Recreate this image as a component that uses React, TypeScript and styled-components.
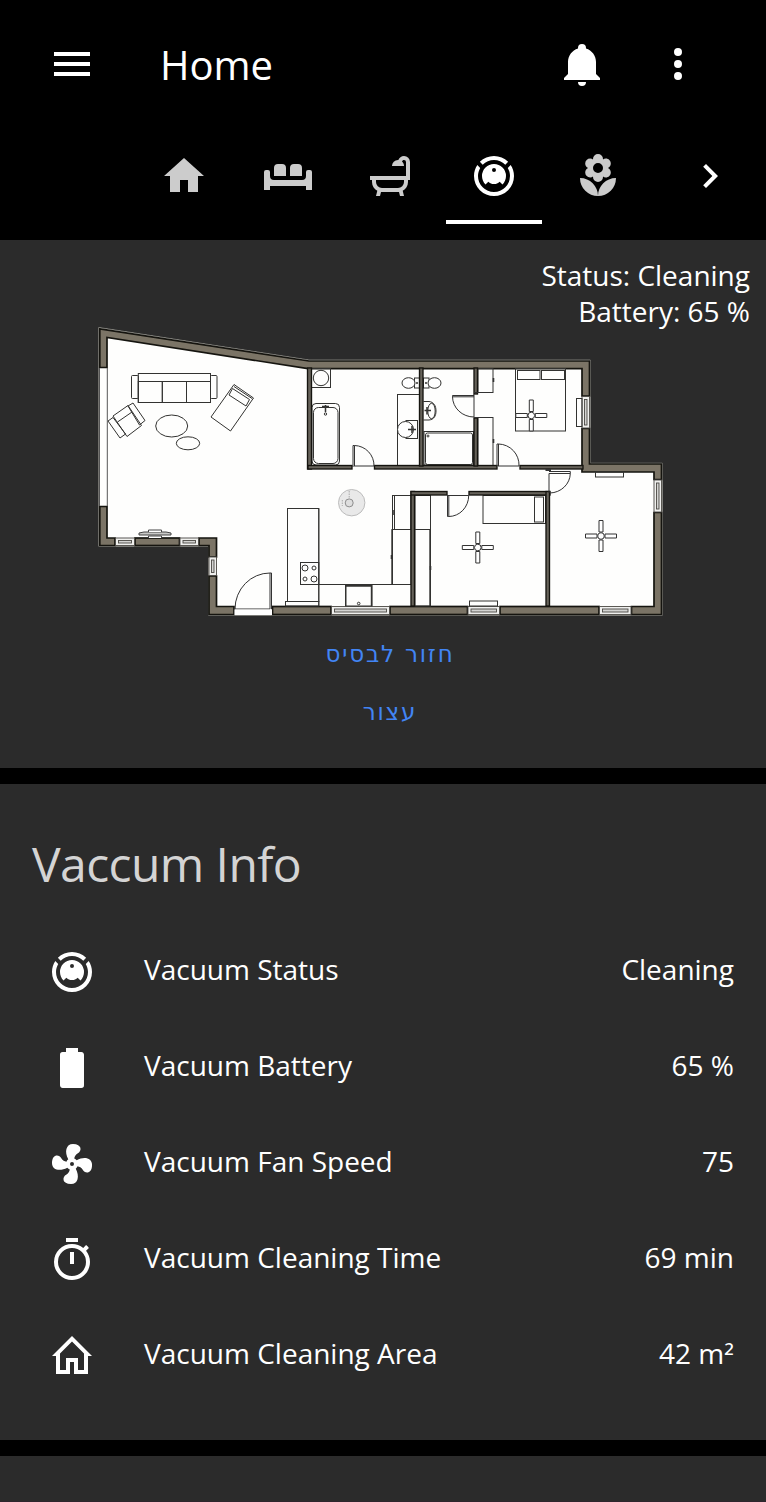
import React from "react";
import styled, { createGlobalStyle } from "styled-components";

const GlobalStyle = createGlobalStyle`
  html, body { margin: 0; background: #000; }
  body { font-family: "Open Sans", "Noto Sans", sans-serif; color: #fff; overflow: hidden; }
  * { box-sizing: border-box; }
`;

const icons = {
  menu: "M3,6H21V8H3V6M3,11H21V13H3V11M3,16H21V18H3V16Z",
  bell: "M21,19V20H3V19L5,17V11C5,7.9 7.03,5.17 10,4.29C10,4.19 10,4.1 10,4A2,2 0 0,1 12,2A2,2 0 0,1 14,4C14,4.1 14,4.19 14,4.29C16.97,5.17 19,7.9 19,11V17L21,19M14,21A2,2 0 0,1 12,23A2,2 0 0,1 10,21",
  dots: "M12,16A2,2 0 0,1 14,18A2,2 0 0,1 12,20A2,2 0 0,1 10,18A2,2 0 0,1 12,16M12,10A2,2 0 0,1 14,12A2,2 0 0,1 12,14A2,2 0 0,1 10,12A2,2 0 0,1 12,10M12,4A2,2 0 0,1 14,6A2,2 0 0,1 12,8A2,2 0 0,1 10,6A2,2 0 0,1 12,4Z",
  home: "M10,20V14H14V20H19V12H22L12,3L2,12H5V20H10Z",
  sofa: "M7,6H9A2,2 0 0,1 11,8V12H5V8A2,2 0 0,1 7,6M15,6H17A2,2 0 0,1 19,8V12H13V8A2,2 0 0,1 15,6M1,9H2A1,1 0 0,1 3,10V12A2,2 0 0,0 5,14H19A2,2 0 0,0 21,12V10A1,1 0 0,1 22,9H23A1,1 0 0,1 24,10V19H21V17H3V19H0V10A1,1 0 0,1 1,9Z",
  bath: "M21,14V15C21,16.91 19.93,18.57 18.35,19.41L19,22H17L16.5,20C16.33,20 16.17,20 16,20H8C7.83,20 7.67,20 7.5,20L7,22H5L5.65,19.41C4.07,18.57 3,16.91 3,15V14H2V12H20V5A1,1 0 0,0 19,4C18.5,4 18.12,4.34 18,4.79C18.63,5.33 19,6.13 19,7H13A3,3 0 0,1 16,4C16.06,4 16.11,4 16.17,4C16.58,2.84 17.69,2 19,2A3,3 0 0,1 22,5V14H21V14M19,14H5V15A3,3 0 0,0 8,18H16A3,3 0 0,0 19,15V14Z",
  vacuum: "M12,2C14.65,2 17.19,3.06 19.07,4.93L17.65,6.35C16.15,4.85 14.12,4 12,4C9.88,4 7.84,4.84 6.35,6.35L4.93,4.93C6.81,3.06 9.35,2 12,2M3.66,6.5L5.11,7.94C4.39,9.17 4,10.57 4,12A8,8 0 0,0 12,20A8,8 0 0,0 20,12C20,10.57 19.61,9.17 18.88,7.94L20.34,6.5C21.42,8.12 22,10.04 22,12A10,10 0 0,1 12,22A10,10 0 0,1 2,12C2,10.04 2.58,8.12 3.66,6.5M12,6A6,6 0 0,1 18,12C18,13.59 17.37,15.12 16.24,16.24L14.83,14.83C14.08,15.58 13.06,16 12,16C10.94,16 9.92,15.58 9.17,14.83L7.76,16.24C6.63,15.12 6,13.59 6,12A6,6 0 0,1 12,6M12,8A1,1 0 0,0 11,9A1,1 0 0,0 12,10A1,1 0 0,0 13,9A1,1 0 0,0 12,8Z",
  flower: "M3,13A9,9 0 0,0 12,22C12,17 7.97,13 3,13M12,5.5A2.5,2.5 0 0,1 14.5,8A2.5,2.5 0 0,1 12,10.5A2.5,2.5 0 0,1 9.5,8A2.5,2.5 0 0,1 12,5.5M5.6,10.25A2.5,2.5 0 0,0 8.1,12.75C8.63,12.75 9.12,12.58 9.5,12.31C9.5,12.37 9.5,12.43 9.5,12.5A2.5,2.5 0 0,0 12,15A2.5,2.5 0 0,0 14.5,12.5C14.5,12.43 14.5,12.37 14.5,12.31C14.88,12.58 15.37,12.75 15.9,12.75C17.28,12.75 18.4,11.63 18.4,10.25C18.4,9.25 17.81,8.4 16.97,8C17.81,7.6 18.4,6.74 18.4,5.75C18.4,4.37 17.28,3.25 15.9,3.25C15.37,3.25 14.88,3.41 14.5,3.69C14.5,3.63 14.5,3.56 14.5,3.5A2.5,2.5 0 0,0 12,1A2.5,2.5 0 0,0 9.5,3.5C9.5,3.56 9.5,3.63 9.5,3.69C9.12,3.41 8.63,3.25 8.1,3.25A2.5,2.5 0 0,0 5.6,5.75C5.6,6.74 6.19,7.6 7.03,8C6.19,8.4 5.6,9.25 5.6,10.25M12,22A9,9 0 0,0 21,13C16,13 12,17 12,22Z",
  chevron: "M8.59,16.58L13.17,12L8.59,7.41L10,6L16,12L10,18L8.59,16.58Z",
  battery: "M16.67,4H15V2H9V4H7.33A1.33,1.33 0 0,0 6,5.33V20.67C6,21.4 6.6,22 7.33,22H16.67A1.33,1.33 0 0,0 18,20.67V5.33C18,4.6 17.4,4 16.67,4Z",
  fan: "M12,11A1,1 0 0,0 11,12A1,1 0 0,0 12,13A1,1 0 0,0 13,12A1,1 0 0,0 12,11M12.5,2C17,2 17.11,5.57 14.75,6.75C13.76,7.24 13.32,8.29 13.13,9.22C13.61,9.42 14.03,9.73 14.35,10.13C18.05,8.13 22.03,8.92 22.03,12.5C22.03,17 18.46,17.1 17.28,14.73C16.78,13.74 15.72,13.3 14.79,13.11C14.59,13.59 14.28,14 13.88,14.34C15.87,18.03 15.08,22 11.5,22C7,22 6.91,18.42 9.27,17.24C10.25,16.75 10.69,15.71 10.89,14.79C10.4,14.59 9.97,14.27 9.65,13.87C5.96,15.85 2,15.07 2,11.5C2,7 5.56,6.89 6.74,9.26C7.24,10.25 8.29,10.68 9.22,10.87C9.41,10.39 9.73,9.97 10.14,9.65C8.15,5.96 8.94,2 12.5,2Z",
  timer: "M12,20A7,7 0 0,1 5,13A7,7 0 0,1 12,6A7,7 0 0,1 19,13A7,7 0 0,1 12,20M19.03,7.39L20.45,5.97C20,5.46 19.55,5 19.04,4.56L17.62,6C16.07,4.74 14.12,4 12,4A9,9 0 0,0 3,13A9,9 0 0,0 12,22C17,22 21,17.97 21,13C21,10.88 20.26,8.93 19.03,7.39M11,14H13V8H11M15,1H9V3H15V1Z",
  homeOutline: "M12,2L2,12H4V21H11V15H13V21H20V12H22L12,2M6,10.8L12,4.8L18,10.8V19H15V13H9V19H6V10.8Z",
};

const IconSvg = styled.svg`
  display: block;
  flex: none;
  width: 48px;
  height: 48px;
  fill: currentColor;
`;

const Icon = ({ name }: { name: keyof typeof icons }) => (
  <IconSvg viewBox="0 0 24 24" aria-hidden="true">
    <path d={icons[name]} />
  </IconSvg>
);

const Page = styled.div`
  width: 766px;
  height: 1502px;
  overflow: hidden;
  display: flex;
  flex-direction: column;
  gap: 16px;
  background: #000;
`;

const Top = styled.div`
  flex: none;
`;

const Header = styled.header`
  height: 240px;
  background: #000;
`;

const Toolbar = styled.div`
  display: flex;
  align-items: center;
  height: 128px;
  padding: 0 64px 0 48px;
`;

const PageTitle = styled.h1`
  flex: 1;
  margin: 2px 0 0 64px;
  font-size: 40px;
  font-weight: 430;
  line-height: 54px;
`;

const Actions = styled.div`
  display: flex;
  gap: 48px;
`;

const TabBar = styled.nav`
  display: flex;
  align-items: center;
  gap: 8px;
  height: 96px;
  padding: 0 32px 0 136px;
`;

const Tab = styled.div<{ $active?: boolean; $nudge?: number }>`
  display: flex;
  justify-content: center;
  align-items: center;
  width: 96px;
  height: 96px;
  margin-left: ${(p) => p.$nudge ?? 0}px;
  color: ${(p) => (p.$active ? "#fff" : "#ccc")};
  box-shadow: ${(p) => (p.$active ? "inset 0 -4px 0 #fff" : "none")};
`;

const TabScroll = styled.div`
  margin-left: auto;
`;

const MapCard = styled.section`
  position: relative;
  display: flex;
  flex-direction: column;
  height: 528px;
  padding-top: 80px;
  background: #2b2b2b;
`;

const MapStatus = styled.div`
  position: absolute;
  top: 17px;
  right: 16px;
  font-size: 28px;
  line-height: 36px;
  text-align: right;
`;

const Plan = styled.svg`
  display: block;
  width: 580px;
  height: 305px;
  margin-left: 90px;
`;

const MapButtons = styled.div`
  display: flex;
  flex-direction: column;
  align-items: center;
  padding-left: 14px;
`;

const MapButton = styled.button`
  height: 58px;
  padding: 0;
  border: 0;
  background: none;
  color: #4285f4;
  font-family: "DejaVu Sans", sans-serif;
  font-size: 23px;
  letter-spacing: 1.8px;
  line-height: 58px;
`;

const InfoCard = styled.section`
  flex: none;
  height: 656px;
  padding: 48px 32px 0;
  background: #2b2b2b;
`;

const InfoTitle = styled.h2`
  margin: 0 0 28px;
  font-size: 48px;
  font-weight: 400;
  line-height: 64px;
  letter-spacing: -0.58px;
  color: #d4d4d4;
`;

const InfoRow = styled.div`
  display: flex;
  align-items: center;
  height: 96px;
  padding-left: 16px;
  font-size: 28px;
`;

const RowLabel = styled.span`
  flex: 1;
  margin: -6px 0 0 48px;
`;

const RowValue = styled.span`
  margin-top: -6px;
`;

const Exponent = styled.span`
  line-height: 1;
  vertical-align: -3px;
`;

const NextCard = styled.section`
  flex: 1;
  background: #2b2b2b;
  border-bottom: 1px solid #2d252d;
`;

/* Boxes on the plan are given as left, top, right, bottom. */
type Box = [number, number, number, number];

const outerWalls: Box[] = [
  [135, 538, 179.5, 545.5],
  [272.5, 606.5, 331, 614.5],
  [390, 606.5, 467.5, 614.5],
  [500, 606.5, 599, 614.5],
];

const innerWalls: Box[] = [
  [307.5, 368, 311.5, 469],
  [308, 465.5, 352, 469],
  [374.5, 465.5, 497, 469],
  [520, 465.5, 583, 469],
  [419.5, 368, 423, 466],
  [474, 368, 477.5, 394],
  [474, 418, 477.5, 466],
  [411, 491.5, 414.5, 606],
  [411, 491.5, 447, 495],
  [469, 491.5, 550, 495],
  [546, 491.5, 549.5, 606],
];

const windows: Box[] = [
  [115.5, 538, 134.5, 545.5],
  [180, 538, 198.5, 545.5],
  [209, 557, 216.5, 575.5],
  [331.5, 606.5, 389.5, 614.5],
  [468, 606.5, 499.5, 614.5],
  [599.5, 606.5, 631, 614.5],
  [582, 396.5, 589.5, 428],
  [654, 480, 661.5, 512],
];

const furniture: Box[] = [
  [138.3, 373.5, 210.5, 402.5],
  [138.3, 381.5, 162.3, 402.5],
  [162.3, 381.5, 186.5, 402.5],
  [186.5, 381.5, 210.5, 402.5],
  [311.5, 368.5, 330.5, 387.5],
  [397.5, 394.5, 420, 466],
  [406, 420.5, 417.5, 438.5],
  [414.5, 378, 420, 388],
  [423.5, 378, 429, 388],
  [424, 431.5, 473.5, 465],
  [478, 368.5, 493, 392.5],
  [478, 417.5, 493, 466],
  [515.5, 368.5, 565.5, 431],
  [517.5, 370.5, 540, 379.5],
  [541.5, 370.5, 564.5, 379.5],
  [576.5, 398.5, 582, 426.5],
  [595.5, 472, 623.5, 477],
  [483, 495.5, 545.5, 523.5],
  [534.5, 497, 543.5, 522],
  [415, 495.5, 430.5, 529.5],
  [415, 529.5, 430.5, 606],
  [469.5, 601, 497.5, 606],
  [392.5, 495.5, 411, 529.5],
  [394.5, 495.5, 411, 529.5],
  [392, 529.5, 411, 584.5],
  [345.5, 585.5, 372, 606],
  [287.5, 508.5, 318.8, 601.5],
  [285.5, 601.5, 318.8, 606],
  [300.5, 562.5, 318.8, 584.5],
];

const Rect = ({ box: [l, t, r, b], ...rest }: { box: Box } & React.SVGProps<SVGRectElement>) => (
  <rect x={l} y={t} width={r - l} height={b - t} {...rest} />
);

const CeilingFan = ({ x, y }: { x: number; y: number }) => (
  <g transform={`translate(${x} ${y})`} fill="#fff" stroke="#333" strokeWidth="1">
    <path d="M-2,-4V-15.5H2V-4ZM-2,4V15.5H2V4ZM-4,-2H-15.5V2H-4ZM4,-2H15.5V2H4Z" />
    <circle r="3.3" />
  </g>
);

const WindowMark = ({ box }: { box: Box }) => {
  const [l, t, r, b] = box;
  const wide = r - l > b - t;
  const inner: Box = wide ? [l + 3, t + 2.5, r - 3, b - 2.5] : [l + 2.5, t + 3, r - 2.5, b - 3];
  return (
    <g stroke="#4a4844" strokeWidth="0.9">
      <Rect box={box} fill="#f0f0ee" />
      <Rect box={inner} fill="#d4d4d2" />
    </g>
  );
};

const FloorPlan = () => (
  <Plan viewBox="90 320 580 305" role="img" aria-label="Floor plan">
    <path
      d="M98.8,327.5L309,360H590.3V463.2H662.3V615.3H208.5V546.3H98.8Z"
      fill="#fefefd"
      stroke="#8c8a84"
      strokeWidth="0.8"
    />
    <g fill="#7b7466" stroke="#15140f" strokeWidth="1.7">
      <path d="M99.8,328.8L309,361H589.5V396H582V368.6H308L107,337.5V367.5H99.8Z" />
      <path d="M582,428.5H589.5V464H661.5V479.5H654V472H582Z" />
      <path d="M654,512.5H661.5V614.5H631.5V606.5H654Z" />
      <path d="M199,538H216.5V557H209V545.5H199Z" />
      <path d="M209,576H216.5V606.5H234V614.5H209Z" />
      <path d="M99.8,506.5H107V538H115V545.5H99.8Z" />
      {outerWalls.map((b, i) => (
        <Rect key={i} box={b} />
      ))}
    </g>
    <path d="M107.3,368V506M99.5,368V506" stroke="#555" strokeWidth="1" />
    {windows.map((b, i) => (
      <WindowMark key={i} box={b} />
    ))}
    <g fill="none" stroke="#333331" strokeWidth="1">
      {furniture.map((b, i) => (
        <Rect key={i} box={b} />
      ))}
      <rect x="131.5" y="375.5" width="6.8" height="23" rx="1" />
      <rect x="210.5" y="375.5" width="6.5" height="23" rx="1" />
      <path d="M234,384.5L253.5,398L230.5,431L211,417Z" />
      <path d="M232.5,388.5L249.5,399.5L246,406L229,395Z M234,386.5L252,398.5" />
      <path d="M113,416L128,405.5L141.5,425.5L127,436.5ZM117.5,422L132,412" />
      <path d="M108,421L113,417.5L125.5,434L120,438Z" />
      <path d="M128,406L133,403L145,420.5L139.5,425Z" />
      <ellipse cx="171.7" cy="426" rx="16" ry="11" />
      <ellipse cx="188" cy="443.3" rx="11.7" ry="6.5" />
      <circle cx="321" cy="378" r="7.7" />
      <rect x="312" y="403.5" width="27.5" height="61.5" rx="4" />
      <rect x="313.5" y="407.5" width="24.5" height="56" rx="5" />
      <path d="M322,406.5H329M325.5,405V412" strokeWidth="1.5" />
      <circle cx="325.5" cy="414" r="1.2" />
      <circle cx="405.5" cy="429.5" r="8" fill="#fff" />
      <path d="M408,429.5H416M412,426V433" strokeWidth="1.5" />
      <ellipse cx="408.5" cy="383" rx="6.5" ry="5.3" fill="#fff" />
      <ellipse cx="434.5" cy="383" rx="6.5" ry="5.3" fill="#fff" />
      <circle cx="417" cy="383" r="0.7" />
      <circle cx="426" cy="383" r="0.7" />
      <path d="M423.5,401.5H429C434,402 436,406 436,411S434,419.5 429,420H423.5" />
      <ellipse cx="431.5" cy="411" rx="3.7" ry="7.7" />
      <path d="M424.5,410.5H431M427,407V414.5" strokeWidth="1.5" />
      <rect x="425.5" y="433" width="47" height="31.5" rx="2" />
      <circle cx="428" cy="436" r="1" />
      <circle cx="305" cy="568" r="3" />
      <circle cx="314" cy="568" r="2" />
      <circle cx="305" cy="579" r="2" />
      <circle cx="314" cy="579" r="3" />
      <path d="M318.8,584.5H411M318.8,508.5V606" />
      <circle cx="358.7" cy="603.5" r="1.3" />
      <path d="M430,529.5V606M392.3,529.5V584.5M345.8,606V586H371.5V606" strokeWidth="1.4" />
    </g>
    <g fill="#66625a" stroke="#15140f" strokeWidth="1.35">
      {innerWalls.map((b, i) => (
        <Rect key={i} box={b} />
      ))}
    </g>
    <g fill="none" stroke="#333" strokeWidth="1">
      <path d="M353,467V445.5H354.5V466M354.5,445.5A20,20 0 0,1 374,466H354" />
      <path d="M497,466V444H498.5V466M498.5,444A21,21 0 0,1 519,466H498" />
      <path d="M474,395.5H452.5V396.8H474M452.5,396.8A21.5,20.5 0 0,0 474,417V394M474,392.5H493M474,417.5H493" />
      <path d="M447.5,495V516.5H448.8V495M448.8,516.5A20,21 0 0,0 468.7,495.5H448" />
      <path d="M549,471.5H570.3V473.5H549V493M570.3,473.5A21,20 0 0,1 550,493" />
      <path d="M271.5,609V573H270V609M270,573A35,36 0 0,0 235,609H270" />
      <path d="M545.5,470H550V472" strokeWidth="2" />
      <path d="M393,510V515M391.5,555V559M430.5,566V570M493.5,378V382M493.5,439V443" strokeWidth="1.6" />
    </g>
    <path d="M234.5,609.5H272V615H234.5Z" fill="#fff" />
    <path d="M139,535V533L144,532H166L171,533V535Z" fill="#c8c8c6" stroke="#444" strokeWidth="1" />
    <path d="M148.5,532V530H161.5V532M148.5,538V536H161.5V538" fill="#fff" stroke="#444" strokeWidth="1" />
    <CeilingFan x={531.3} y={415.5} />
    <CeilingFan x={477.8} y={547.5} />
    <CeilingFan x={601} y={536} />
    <circle cx="351.7" cy="502.7" r="13.2" fill="#e9e9e9" stroke="#bcbcbc" strokeWidth="1" />
    <circle cx="349.2" cy="502.9" r="4" fill="#dedede" stroke="#8c8c8c" strokeWidth="1" />
    <path d="M349.2,491V498.5M342.3,500V506" fill="none" stroke="#aaa" strokeWidth="1" strokeDasharray="1.5 1" />
  </Plan>
);

const rows: { icon: keyof typeof icons; label: string; value: React.ReactNode }[] = [
  { icon: "vacuum", label: "Vacuum Status", value: "Cleaning" },
  { icon: "battery", label: "Vacuum Battery", value: "65 %" },
  { icon: "fan", label: "Vacuum Fan Speed", value: "75" },
  { icon: "timer", label: "Vacuum Cleaning Time", value: "69 min" },
  { icon: "homeOutline", label: "Vacuum Cleaning Area", value: <>42 m<Exponent>²</Exponent></> },
];

export default function App() {
  return (
    <>
      <GlobalStyle />
      <Page>
        <Top>
          <Header>
            <Toolbar>
              <Icon name="menu" />
              <PageTitle>Home</PageTitle>
              <Actions>
                <Icon name="bell" />
                <Icon name="dots" />
              </Actions>
            </Toolbar>
            <TabBar>
              <Tab><Icon name="home" /></Tab>
              <Tab><Icon name="sofa" /></Tab>
              <Tab $nudge={-2}><Icon name="bath" /></Tab>
              <Tab $active><Icon name="vacuum" /></Tab>
              <Tab><Icon name="flower" /></Tab>
              <TabScroll><Icon name="chevron" /></TabScroll>
            </TabBar>
          </Header>
          <MapCard>
            <FloorPlan />
            <MapStatus>
              <div>Status: Cleaning</div>
              <div>Battery: 65 %</div>
            </MapStatus>
            <MapButtons dir="rtl">
              <MapButton>חזור לבסיס</MapButton>
              <MapButton>עצור</MapButton>
            </MapButtons>
          </MapCard>
        </Top>
        <InfoCard>
          <InfoTitle>Vaccum Info</InfoTitle>
          {rows.map((r) => (
            <InfoRow key={r.label}>
              <Icon name={r.icon} />
              <RowLabel>{r.label}</RowLabel>
              <RowValue>{r.value}</RowValue>
            </InfoRow>
          ))}
        </InfoCard>
        <NextCard />
      </Page>
    </>
  );
}
